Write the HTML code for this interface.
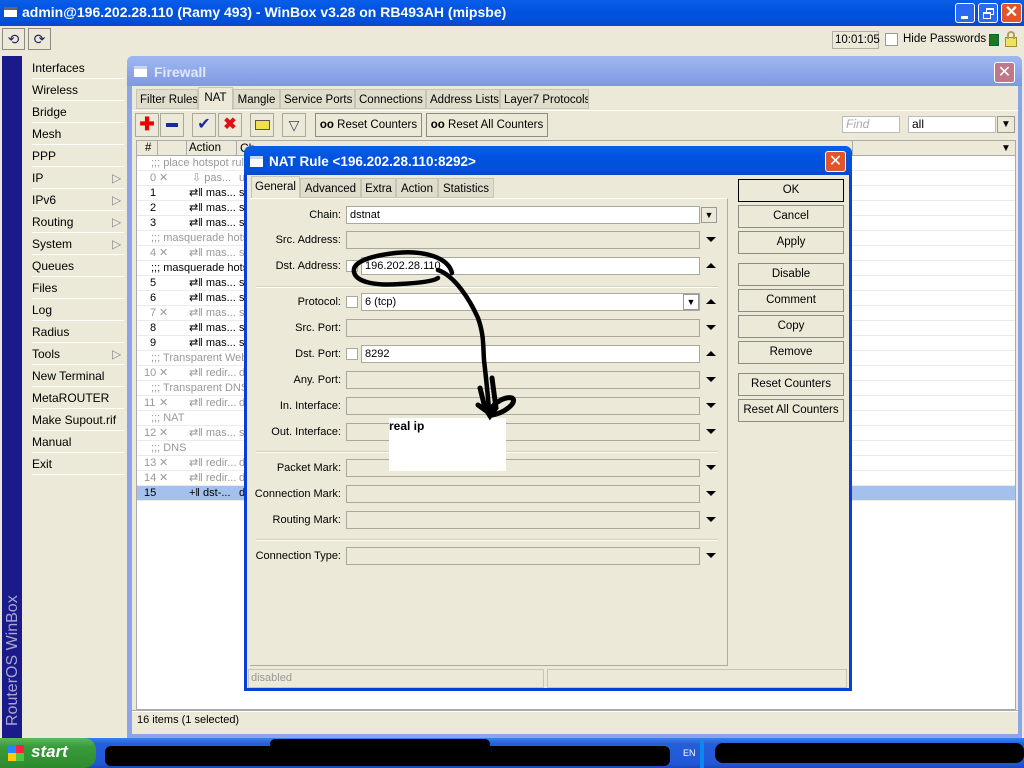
<!DOCTYPE html>
<html><head><meta charset="utf-8"><style>
*{box-sizing:border-box;margin:0;padding:0}
body{width:1024px;height:768px;overflow:hidden;background:#ece9d8;font-family:"Liberation Sans",sans-serif;font-size:12px;color:#000;position:relative}
.a{position:absolute}
.tb{background:linear-gradient(#0a5ee8,#0053e0 40%,#0150d8 80%,#0a48c8)}
.btn{position:absolute;background:#ece9d8;border:1px solid #8c8c80;text-align:center;line-height:20px;font-size:11.5px;white-space:nowrap}
.mi{position:absolute;left:32px;height:22px;line-height:22px;border-bottom:1px solid #fff;width:92px}
.row{position:absolute;left:137px;width:878px;height:15px;line-height:15px;border-bottom:1px solid #ebebeb;font-size:11px;white-space:nowrap}
.g{color:#999}
.lbl{position:absolute;width:95px;left:246px;text-align:right;font-size:11px;line-height:18px}
.fd{position:absolute;height:18px;border:1px solid #a8a89c;line-height:16px;padding-left:3px;font-size:11px}
.w{background:#fff}
.cb{position:absolute;width:12px;height:12px;border:1px solid #a8a89c;background:#fff}
.ar{position:absolute;left:706px;width:0;height:0;border-left:5px solid transparent;border-right:5px solid transparent}
.dn{border-top:5px solid #000}
.up{border-bottom:5px solid #000}
.sep{position:absolute;left:256px;width:462px;border-top:1px solid #d4d0c0;border-bottom:1px solid #fff}
.tab{position:absolute;height:20px;line-height:20px;border:1px solid #c8c4b4;background:#e0ddcc;padding:0 3px;font-size:11.5px;white-space:nowrap;text-align:center;overflow:hidden}
.tbb{position:absolute;top:113px;height:24px;width:24px;border:1px solid #a8a89c;background:#ece9d8}
</style></head><body>
<div class="a tb" style="left:0;top:0;width:1024px;height:26px"></div>
<div class="a" style="left:4px;top:7px;width:13px;height:10px;background:#fff;border-top:3px solid #666"></div>
<div class="a" style="left:22px;top:4px;color:#fff;font-weight:bold;font-size:14px">admin@196.202.28.110 (Ramy 493) - WinBox v3.28 on RB493AH (mipsbe)</div>
<div class="a" style="left:955px;top:3px;width:20px;height:20px;border:1px solid #fff;border-radius:3px;background:#2a6af0"><div class="a" style="left:5px;top:12px;width:7px;height:3px;background:#fff"></div></div>
<div class="a" style="left:978px;top:3px;width:20px;height:20px;border:1px solid #fff;border-radius:3px;background:#2a6af0"><div class="a" style="left:7px;top:4px;width:8px;height:7px;border:1px solid #fff;border-top-width:2px"></div><div class="a" style="left:4px;top:8px;width:8px;height:7px;border:1px solid #fff;border-top-width:2px;background:#2a6af0"></div></div>
<div class="a" style="left:1001px;top:3px;width:21px;height:20px;border:1px solid #fff;border-radius:3px;background:#e0552a;color:#fff;font-weight:bold;font-size:16px;text-align:center;line-height:18px">✕</div>
<div class="btn" style="left:2px;top:28px;width:23px;height:22px;font-size:14px;color:#226">⟲</div>
<div class="btn" style="left:28px;top:28px;width:23px;height:22px;font-size:14px;color:#226">⟳</div>
<div class="a" style="left:832px;top:31px;width:47px;height:18px;border:1px solid #b0b0a0;line-height:16px;padding-left:2px;font-size:11.5px">10:01:05</div>
<div class="a" style="left:885px;top:33px;width:13px;height:13px;border:1px solid #999;background:#fff"></div>
<div class="a" style="left:903px;top:33px;font-size:11.5px;white-space:nowrap">Hide Passwords</div>
<div class="a" style="left:989px;top:34px;width:10px;height:12px;background:#1c7a1c;border:1px solid #064"></div>
<div class="a" style="left:1005px;top:37px;width:12px;height:10px;background:#f0e060;border:1px solid #a09030"></div>
<div class="a" style="left:1007px;top:31px;width:8px;height:8px;border:2px solid #b0a060;border-bottom:none;border-radius:4px 4px 0 0"></div>
<div class="a" style="left:2px;top:56px;width:20px;height:682px;background:#1a1a8a"></div>
<div class="a" style="left:-66px;top:637px;width:158px;height:20px;transform:rotate(-90deg);color:#a8a8cc;font-size:16px;line-height:20px;text-align:left;white-space:nowrap">RouterOS WinBox</div>
<div class="a" style="left:22px;top:56px;width:104px;height:682px;background:#ece9d8"></div>
<div class="mi" style="top:57px">Interfaces</div>
<div class="mi" style="top:79px">Wireless</div>
<div class="mi" style="top:101px">Bridge</div>
<div class="mi" style="top:123px">Mesh</div>
<div class="mi" style="top:145px">PPP</div>
<div class="mi" style="top:167px">IP<span class="a" style="left:80px;color:#888">▷</span></div>
<div class="mi" style="top:189px">IPv6<span class="a" style="left:80px;color:#888">▷</span></div>
<div class="mi" style="top:211px">Routing<span class="a" style="left:80px;color:#888">▷</span></div>
<div class="mi" style="top:233px">System<span class="a" style="left:80px;color:#888">▷</span></div>
<div class="mi" style="top:255px">Queues</div>
<div class="mi" style="top:277px">Files</div>
<div class="mi" style="top:299px">Log</div>
<div class="mi" style="top:321px">Radius</div>
<div class="mi" style="top:343px">Tools<span class="a" style="left:80px;color:#888">▷</span></div>
<div class="mi" style="top:365px">New Terminal</div>
<div class="mi" style="top:387px">MetaROUTER</div>
<div class="mi" style="top:409px">Make Supout.rif</div>
<div class="mi" style="top:431px">Manual</div>
<div class="mi" style="top:453px">Exit</div>
<div class="a" style="left:127px;top:56px;width:895px;height:682px;background:#8ca4e8;border-radius:6px 6px 0 0"></div>
<div class="a" style="left:127px;top:56px;width:895px;height:30px;background:linear-gradient(#a0b8f0,#7e98e4);border-radius:6px 6px 0 0"></div>
<div class="a" style="left:134px;top:66px;width:13px;height:11px;background:#fff;border-top:3px solid #c8d4f0"></div>
<div class="a" style="left:154px;top:64px;color:#e0e8ff;font-weight:bold;font-size:14px">Firewall</div>
<div class="a" style="left:994px;top:62px;width:21px;height:21px;border:1px solid #fff;border-radius:3px;background:#c07888;color:#fff;font-size:16px;text-align:center;line-height:19px">✕</div>
<div class="a" style="left:132px;top:86px;width:886px;height:648px;background:#ece9d8"></div>
<div class="tab" style="left:136px;top:89px;width:62px">Filter Rules</div>
<div class="tab" style="left:198px;top:87px;height:23px;background:#ece9d8;border-bottom:none;width:35px">NAT</div>
<div class="tab" style="left:233px;top:89px;width:47px">Mangle</div>
<div class="tab" style="left:280px;top:89px;width:75px">Service Ports</div>
<div class="tab" style="left:355px;top:89px;width:71px">Connections</div>
<div class="tab" style="left:426px;top:89px;width:74px">Address Lists</div>
<div class="tab" style="left:500px;top:89px;width:89px">Layer7 Protocols</div>
<div class="a" style="left:132px;top:110px;width:886px;border-top:1px solid #fff"></div>
<div class="tbb" style="left:135px;color:#e00;font-weight:bold;font-size:18px;text-align:center;line-height:20px">✚</div>
<div class="tbb" style="left:160px"><div class="a" style="left:5px;top:9px;width:12px;height:4px;background:#1a2a9a"></div></div>
<div class="tbb" style="left:192px;color:#1a2aa0;font-size:16px;text-align:center;line-height:22px">✔</div>
<div class="tbb" style="left:218px;color:#e01010;font-size:16px;text-align:center;line-height:22px;font-weight:bold">✖</div>
<div class="tbb" style="left:250px"><div class="a" style="left:4px;top:6px;width:15px;height:10px;background:#f0e050;border:1px solid #555"></div></div>
<div class="tbb" style="left:282px;text-align:center;font-size:14px;line-height:22px;color:#445">▽</div>
<div class="btn" style="left:315px;top:113px;width:107px;height:24px;line-height:22px"><b>oo</b> Reset Counters</div>
<div class="btn" style="left:426px;top:113px;width:122px;height:24px;line-height:22px"><b>oo</b> Reset All Counters</div>
<div class="a" style="left:842px;top:116px;width:58px;height:17px;background:#fff;border:1px solid #bbb;color:#aaa;font-style:italic;padding-left:3px;line-height:15px">Find</div>
<div class="a" style="left:908px;top:116px;width:88px;height:17px;background:#fff;border:1px solid #bbb;padding-left:3px;line-height:15px">all</div>
<div class="a" style="left:997px;top:116px;width:18px;height:17px;border:1px solid #999;text-align:center;line-height:15px;font-size:10px">▼</div>
<div class="a" style="left:136px;top:140px;width:880px;height:570px;background:#fff;border:1px solid #aaa"></div>
<div class="a" style="left:137px;top:141px;width:878px;height:15px;background:#ece9d8;border-bottom:1px solid #aaa"></div>
<div class="a" style="left:145px;top:141px;line-height:15px;font-size:11.5px">#</div>
<div class="a" style="left:157px;top:141px;height:15px;border-left:1px solid #aaa"></div>
<div class="a" style="left:186px;top:141px;height:15px;border-left:1px solid #aaa"></div>
<div class="a" style="left:189px;top:141px;line-height:15px;font-size:11.5px">Action</div>
<div class="a" style="left:236px;top:141px;height:15px;border-left:1px solid #aaa;padding-left:3px;line-height:15px">Ch</div>
<div class="a" style="left:852px;top:141px;height:15px;border-left:1px solid #aaa"></div>
<div class="a" style="left:1001px;top:143px;font-size:10px">▼</div>
<div class="row g" style="top:156px;padding-left:14px">;;; place hotspot rule</div>
<div class="row g" style="top:171px"><span class="a" style="left:13px">0</span><span class="a" style="left:22px">✕</span><span class="a" style="left:55px">⇩ pas...</span><span class="a" style="left:102px">u</span></div>
<div class="row" style="top:186px"><span class="a" style="left:13px">1</span><span class="a" style="left:52px">⇄‖ mas...</span><span class="a" style="left:102px">s</span></div>
<div class="row" style="top:201px"><span class="a" style="left:13px">2</span><span class="a" style="left:52px">⇄‖ mas...</span><span class="a" style="left:102px">s</span></div>
<div class="row" style="top:216px"><span class="a" style="left:13px">3</span><span class="a" style="left:52px">⇄‖ mas...</span><span class="a" style="left:102px">s</span></div>
<div class="row g" style="top:231px;padding-left:14px">;;; masquerade hots</div>
<div class="row g" style="top:246px"><span class="a" style="left:13px">4</span><span class="a" style="left:22px">✕</span><span class="a" style="left:52px">⇄‖ mas...</span><span class="a" style="left:102px">s</span></div>
<div class="row" style="top:261px;padding-left:14px">;;; masquerade hots</div>
<div class="row" style="top:276px"><span class="a" style="left:13px">5</span><span class="a" style="left:52px">⇄‖ mas...</span><span class="a" style="left:102px">s</span></div>
<div class="row" style="top:291px"><span class="a" style="left:13px">6</span><span class="a" style="left:52px">⇄‖ mas...</span><span class="a" style="left:102px">s</span></div>
<div class="row g" style="top:306px"><span class="a" style="left:13px">7</span><span class="a" style="left:22px">✕</span><span class="a" style="left:52px">⇄‖ mas...</span><span class="a" style="left:102px">s</span></div>
<div class="row" style="top:321px"><span class="a" style="left:13px">8</span><span class="a" style="left:52px">⇄‖ mas...</span><span class="a" style="left:102px">s</span></div>
<div class="row" style="top:336px"><span class="a" style="left:13px">9</span><span class="a" style="left:52px">⇄‖ mas...</span><span class="a" style="left:102px">s</span></div>
<div class="row g" style="top:351px;padding-left:14px">;;; Transparent Web</div>
<div class="row g" style="top:366px"><span class="a" style="left:7px">10</span><span class="a" style="left:22px">✕</span><span class="a" style="left:52px">⇄‖ redir...</span><span class="a" style="left:102px">d</span></div>
<div class="row g" style="top:381px;padding-left:14px">;;; Transparent DNS</div>
<div class="row g" style="top:396px"><span class="a" style="left:7px">11</span><span class="a" style="left:22px">✕</span><span class="a" style="left:52px">⇄‖ redir...</span><span class="a" style="left:102px">d</span></div>
<div class="row g" style="top:411px;padding-left:14px">;;; NAT</div>
<div class="row g" style="top:426px"><span class="a" style="left:7px">12</span><span class="a" style="left:22px">✕</span><span class="a" style="left:52px">⇄‖ mas...</span><span class="a" style="left:102px">s</span></div>
<div class="row g" style="top:441px;padding-left:14px">;;; DNS</div>
<div class="row g" style="top:456px"><span class="a" style="left:7px">13</span><span class="a" style="left:22px">✕</span><span class="a" style="left:52px">⇄‖ redir...</span><span class="a" style="left:102px">d</span></div>
<div class="row g" style="top:471px"><span class="a" style="left:7px">14</span><span class="a" style="left:22px">✕</span><span class="a" style="left:52px">⇄‖ redir...</span><span class="a" style="left:102px">d</span></div>
<div class="row" style="top:486px;background:#a4c0ec"><span class="a" style="left:7px">15</span><span class="a" style="left:52px">+‖ dst-...</span><span class="a" style="left:102px">d</span></div>
<div class="a" style="left:132px;top:710px;width:886px;border-top:1px solid #aaa;border-bottom:1px solid #fff"></div>
<div class="a" style="left:137px;top:714px;font-size:11px">16 items (1 selected)</div>
<div class="a" style="left:244px;top:146px;width:608px;height:545px;background:#0a3ed8;border-radius:7px 7px 0 0"></div>
<div class="a tb" style="left:244px;top:146px;width:608px;height:29px;border-radius:7px 7px 0 0"></div>
<div class="a" style="left:250px;top:156px;width:13px;height:11px;background:#fff;border-top:3px solid #c8d4f0"></div>
<div class="a" style="left:269px;top:154px;color:#fff;font-weight:bold;font-size:13.5px">NAT Rule &lt;196.202.28.110:8292&gt;</div>
<div class="a" style="left:825px;top:151px;width:21px;height:21px;border:1px solid #fff;border-radius:3px;background:#e0552a;color:#fff;font-size:16px;text-align:center;line-height:19px">✕</div>
<div class="a" style="left:247px;top:175px;width:602px;height:513px;background:#ece9d8"></div>
<div class="tab" style="left:251px;top:176px;height:23px;background:#ece9d8;border-bottom:none;width:49px">General</div>
<div class="tab" style="left:300px;top:178px;width:61px">Advanced</div>
<div class="tab" style="left:361px;top:178px;width:35px">Extra</div>
<div class="tab" style="left:396px;top:178px;width:42px">Action</div>
<div class="tab" style="left:438px;top:178px;width:56px">Statistics</div>
<div class="a" style="left:250px;top:198px;width:478px;height:468px;border-right:1px solid #b0ac9c;border-bottom:1px solid #b0ac9c;border-top:1px solid #fff"></div>
<div class="lbl" style="top:206px">Chain:</div><div class="fd w" style="left:346px;top:206px;width:354px">dstnat</div>
<div class="a" style="left:701px;top:207px;width:16px;height:16px;border:1px solid #999;font-size:9px;text-align:center;line-height:14px">▼</div>
<div class="lbl" style="top:231px">Src. Address:</div><div class="fd" style="left:346px;top:231px;width:354px"></div><div class="ar dn" style="top:237px"></div>
<div class="lbl" style="top:257px">Dst. Address:</div><div class="cb" style="left:346px;top:260px"></div><div class="fd w" style="left:361px;top:257px;width:339px">196.202.28.110</div><div class="ar up" style="top:263px"></div>
<div class="sep" style="top:286px"></div>
<div class="lbl" style="top:293px">Protocol:</div><div class="cb" style="left:346px;top:296px"></div><div class="fd w" style="left:361px;top:293px;width:339px">6 (tcp)</div>
<div class="a" style="left:683px;top:294px;width:16px;height:16px;border:1px solid #999;font-size:9px;text-align:center;line-height:14px">▼</div><div class="ar up" style="top:299px"></div>
<div class="lbl" style="top:319px">Src. Port:</div><div class="fd" style="left:346px;top:319px;width:354px"></div><div class="ar dn" style="top:325px"></div>
<div class="lbl" style="top:345px">Dst. Port:</div><div class="cb" style="left:346px;top:348px"></div><div class="fd w" style="left:361px;top:345px;width:339px">8292</div><div class="ar up" style="top:351px"></div>
<div class="lbl" style="top:371px">Any. Port:</div><div class="fd" style="left:346px;top:371px;width:354px"></div><div class="ar dn" style="top:377px"></div>
<div class="lbl" style="top:397px">In. Interface:</div><div class="fd" style="left:346px;top:397px;width:354px"></div><div class="ar dn" style="top:403px"></div>
<div class="lbl" style="top:423px">Out. Interface:</div><div class="fd" style="left:346px;top:423px;width:354px"></div><div class="ar dn" style="top:429px"></div>
<div class="sep" style="top:451px"></div>
<div class="lbl" style="top:459px">Packet Mark:</div><div class="fd" style="left:346px;top:459px;width:354px"></div><div class="ar dn" style="top:465px"></div>
<div class="lbl" style="top:485px">Connection Mark:</div><div class="fd" style="left:346px;top:485px;width:354px"></div><div class="ar dn" style="top:491px"></div>
<div class="lbl" style="top:511px">Routing Mark:</div><div class="fd" style="left:346px;top:511px;width:354px"></div><div class="ar dn" style="top:517px"></div>
<div class="sep" style="top:539px"></div>
<div class="lbl" style="top:547px">Connection Type:</div><div class="fd" style="left:346px;top:547px;width:354px"></div><div class="ar dn" style="top:553px"></div>
<div class="btn" style="left:738px;top:179px;width:106px;height:23px;border:1px solid #000">OK</div>
<div class="btn" style="left:738px;top:205px;width:106px;height:23px">Cancel</div>
<div class="btn" style="left:738px;top:231px;width:106px;height:23px">Apply</div>
<div class="btn" style="left:738px;top:263px;width:106px;height:23px">Disable</div>
<div class="btn" style="left:738px;top:289px;width:106px;height:23px">Comment</div>
<div class="btn" style="left:738px;top:315px;width:106px;height:23px">Copy</div>
<div class="btn" style="left:738px;top:341px;width:106px;height:23px">Remove</div>
<div class="btn" style="left:738px;top:373px;width:106px;height:23px">Reset Counters</div>
<div class="btn" style="left:738px;top:399px;width:106px;height:23px">Reset All Counters</div>
<div class="a" style="left:248px;top:669px;width:296px;height:19px;border:1px solid #c8c4b4;color:#999;font-size:11px;padding-left:2px;line-height:17px">disabled</div>
<div class="a" style="left:547px;top:669px;width:300px;height:19px;border:1px solid #c8c4b4"></div>
<div class="a" style="left:389px;top:418px;width:117px;height:53px;background:#fff"></div>
<div class="a" style="left:389px;top:419px;font-weight:bold;font-size:12px">real ip</div>
<svg class="a" style="left:0;top:0" width="1024" height="768">
<path d="M452 273 C448 256 420 250 395 253 C370 256 352 262 354 272 C356 282 375 286 400 284 C420 283 434 281 438 278 M438 270 C455 276 470 300 478 318 C484 335 483 345 484 360 C486 378 488 395 489 410" fill="none" stroke="#000" stroke-width="4.5" stroke-linecap="round"/>
<path d="M480 388 L485 408 L490 416 L496 408 L492 378 M478 405 L492 415 C505 413 518 402 512 398 C505 396 494 403 490 410" fill="none" stroke="#000" stroke-width="5" stroke-linecap="round"/>
</svg>
<div class="a" style="left:0;top:738px;width:1024px;height:30px;background:linear-gradient(#3a80f0,#245edb 20%,#2258d8 85%,#1a48b8)"></div>
<div class="a" style="left:0;top:738px;width:96px;height:30px;background:linear-gradient(#5cb85c,#3a9a3a 30%,#2e8a2e);border-radius:0 12px 12px 0"></div>
<div class="a" style="left:8px;top:745px;width:16px;height:16px;background:conic-gradient(#f24 0 25%,#4c4 0 50%,#fc0 0 75%,#28f 0)"></div>
<div class="a" style="left:31px;top:742px;color:#fff;font-style:italic;font-weight:bold;font-size:17px">start</div>
<div class="a" style="left:105px;top:746px;width:565px;height:20px;background:#000;border-radius:6px"></div>
<div class="a" style="left:270px;top:739px;width:220px;height:10px;background:#000;border-radius:6px"></div>
<div class="a" style="left:683px;top:748px;color:#fff;font-size:9px">EN</div>
<div class="a" style="left:715px;top:743px;width:309px;height:20px;background:#000;border-radius:8px"></div>
<div class="a" style="left:700px;top:740px;width:4px;height:28px;background:#0a8af0"></div>
</body></html>
